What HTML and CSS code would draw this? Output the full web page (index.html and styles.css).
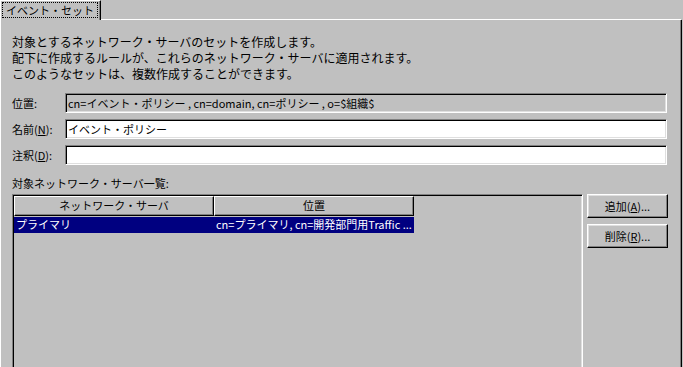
FILE: index.html
```html
<!DOCTYPE html>
<html lang="ja">
<head>
    <meta charset="UTF-8">
    <title>イベント・セット</title>
    <link rel="stylesheet" href="styles.css">
</head>
<body>
    <div class="dialog">
        <div class="tabs">
            <div class="tab"><span class="tab-label">イベント・セット</span></div>
            <div class="tab-fill"></div>
        </div>

        <div class="panel">
            <p class="intro">
                対象とするネットワーク・サーバのセットを作成します。<br>
                配下に作成するルールが、これらのネットワーク・サーバに適用されます。<br>
                このようなセットは、複数作成することができます。
            </p>

            <div class="form">
                <div class="form-row">
                    <label>位置:</label>
                    <div class="field readonly">cn=イベント・ポリシー , cn=domain, cn=ポリシー , o=$組織$</div>
                </div>
                <div class="form-row">
                    <label>名前(<u>N</u>):</label>
                    <div class="field">イベント・ポリシー</div>
                </div>
                <div class="form-row">
                    <label>注釈(<u>D</u>):</label>
                    <div class="field"></div>
                </div>
            </div>

            <div class="list-label">対象ネットワーク・サーバ一覧:</div>

            <div class="list-area">
                <div class="listbox">
                    <div class="list-header">
                        <div class="col-head">ネットワーク・サーバ</div>
                        <div class="col-head">位置</div>
                    </div>
                    <div class="list-row selected">
                        <div class="cell">プライマリ</div>
                        <div class="cell">cn=プライマリ, cn=開発部門用Traffic ...</div>
                    </div>
                </div>
                <div class="side-buttons">
                    <button>追加(<u>A</u>)...</button>
                    <button>削除(<u>R</u>)...</button>
                </div>
            </div>
        </div>
    </div>
</body>
</html>
```

FILE: styles.css
```css
body {
    margin: 0;
    background-color: #c0c0c0;
    font-family: "Noto Sans CJK JP", sans-serif;
    font-size: 11px;
    color: #000;
}
.dialog {
    width: 683px;
    height: 367px;
    overflow: hidden;
}
.tabs {
    display: flex;
    height: 20px;
}
.tab {
    width: 101px;
    height: 20px;
    box-sizing: border-box;
    border-top: 1px solid #fff;
    border-left: 1px solid #fff;
    border-right: 1px solid #000;
    box-shadow: inset -1px 0 #808080;
    padding: 1px 2px 0 1px;
}
.tab-label {
    display: block;
    border: 1px dotted #000;
    height: 16px;
    line-height: 15px;
    padding-left: 3px;
    box-sizing: border-box;
}
.tab-fill {
    width: 580px;
    height: 20px;
    box-sizing: border-box;
    border-bottom: 1px solid #fff;
}
.panel {
    width: 682px;
    height: 347px;
    box-sizing: border-box;
    border-left: 1px solid #fff;
    border-right: 1px solid #000;
    box-shadow: inset -1px 0 #808080;
    padding: 14px 0 0 11px;
}
.intro {
    margin: 0;
    font-size: 12px;
    line-height: 16px;
}
.form {
    display: flex;
    flex-direction: column;
    gap: 6px;
    margin-top: 11px;
}
.form-row {
    display: flex;
    align-items: center;
}
.form-row label {
    width: 53px;
}
.field {
    width: 602px;
    height: 20px;
    box-sizing: border-box;
    background-color: #fff;
    border: 1px solid;
    border-color: #808080 #fff #fff #808080;
    box-shadow: inset 1px 1px #000, inset -1px -1px #dfdfdf;
    padding-left: 2px;
    line-height: 18px;
    white-space: nowrap;
}
.field.readonly {
    background-color: #c0c0c0;
}
.list-label {
    margin-top: 10px;
    line-height: 16px;
}
.list-area {
    display: flex;
    gap: 4px;
    margin-top: 3px;
}
.listbox {
    width: 571px;
    height: 200px;
    box-sizing: border-box;
    border: 1px solid;
    border-color: #808080 #fff #fff #808080;
    box-shadow: inset 1px 1px #000, inset -1px -1px #dfdfdf;
    padding: 1px;
}
.list-header, .list-row {
    display: flex;
}
.col-head {
    width: 200px;
    height: 20px;
    box-sizing: border-box;
    border-top: 1px solid #fff;
    border-left: 1px solid #fff;
    border-right: 1px solid #000;
    border-bottom: 1px solid #000;
    box-shadow: inset -1px -1px #808080;
    text-align: center;
    line-height: 17px;
}
.list-row {
    height: 16px;
    margin-top: 1px;
}
.cell {
    width: 200px;
    padding-left: 2px;
    box-sizing: border-box;
    line-height: 15px;
    white-space: nowrap;
    overflow: hidden;
}
.list-row.selected .cell {
    background-color: #000080;
    color: #fff;
}
.side-buttons {
    display: flex;
    flex-direction: column;
    gap: 6px;
}
button {
    width: 81px;
    height: 24px;
    box-sizing: border-box;
    background-color: #c0c0c0;
    border: 1px solid;
    border-color: #fff #000 #000 #fff;
    box-shadow: inset -1px -1px #808080, inset 1px 1px #dfdfdf;
    font-family: inherit;
    font-size: 11px;
    color: #000;
    padding: 0;
}
```
